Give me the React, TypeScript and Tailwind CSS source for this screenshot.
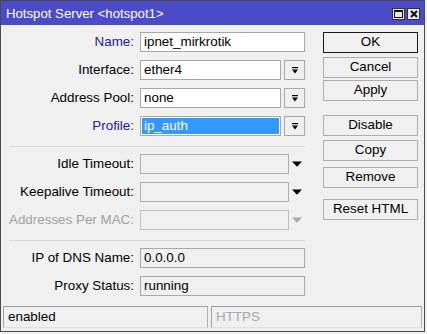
import React from "react";

const font = { fontFamily: '"Liberation Sans", Arial, sans-serif' };

function DropIcon() {
  return (
    <svg width="8" height="7" viewBox="0 0 8 7">
      <rect x="1" y="0" width="6" height="1.2" fill="#000" />
      <polygon points="1,2.5 7,2.5 4,6.5" fill="#000" />
    </svg>
  );
}

function Tri({ gray }: { gray?: boolean }) {
  return (
    <svg width="10" height="6" viewBox="0 0 10 6">
      <polygon points="0,0.5 10,0.5 5,5.8" fill={gray ? "#a8a8a8" : "#000"} />
    </svg>
  );
}

function Label({ children, color }: { children: React.ReactNode; color?: string }) {
  return (
    <div className={`w-[133px] shrink-0 text-right leading-[20px] whitespace-nowrap ${color ?? "text-black"}`}>
      {children}
    </div>
  );
}

function Btn({ children, cls, def }: { children: React.ReactNode; cls: string; def?: boolean }) {
  return (
    <div
      className={`w-[95px] h-[21px] flex items-center justify-center bg-[#f0f0f0] border ${
        def ? "border-[#1a1a1a]" : "border-[#adadad]"
      } ${cls}`}
    >
      {children}
    </div>
  );
}

export default function App() {
  return (
    <div className="w-[427px] h-[334px] bg-[#f0f0f0] text-[13.4px] text-black" style={font}>
      <div className="w-[425px] h-[332px] border border-[#4a4a4a] flex flex-col">
        <div className="h-[24px] bg-[#4b4bc8] flex items-center pl-[5px] pr-[4px] text-white text-[13.2px]">
          <span className="flex-1 pt-[1px]">Hotspot Server &lt;hotspot1&gt;</span>
          <div className="flex gap-[2px] mt-[1px]">
            <div className="w-[13px] h-[12px] bg-[#e6e6e6] border border-[#333] flex items-center justify-center">
              <div className="w-[9px] h-[8px] border border-[#111] border-t-2" />
            </div>
            <div className="w-[13px] h-[12px] bg-[#e6e6e6] border border-[#333] flex items-center justify-center">
              <svg width="8" height="8" viewBox="0 0 8 8">
                <path d="M1 1 L7 7 M7 1 L1 7" stroke="#111" strokeWidth="2" />
              </svg>
            </div>
          </div>
        </div>
        <div className="flex flex-1 pt-[7px]">
          <div className="w-[304px] flex flex-col">
            <div className="flex h-[20px]">
              <Label color="text-[#2020a0]">Name:</Label>
              <div className="ml-[6px] w-[165px] h-[20px] bg-white border border-[#a8a8a8] pl-[3px] leading-[18px]">
                ipnet_mirkrotik
              </div>
            </div>
            <div className="flex h-[20px] mt-[8px]">
              <Label>Interface:</Label>
              <div className="ml-[6px] w-[141px] h-[20px] bg-white border border-[#a8a8a8] pl-[3px] leading-[18px]">
                ether4
              </div>
              <div className="ml-[3px] w-[21px] h-[20px] bg-[#f0f0f0] border border-[#a8a8a8] flex items-center justify-center">
                <DropIcon />
              </div>
            </div>
            <div className="flex h-[20px] mt-[8px]">
              <Label>Address Pool:</Label>
              <div className="ml-[6px] w-[141px] h-[20px] bg-white border border-[#a8a8a8] pl-[3px] leading-[18px]">
                none
              </div>
              <div className="ml-[3px] w-[21px] h-[20px] bg-[#f0f0f0] border border-[#a8a8a8] flex items-center justify-center">
                <DropIcon />
              </div>
            </div>
            <div className="flex h-[20px] mt-[8px]">
              <Label color="text-[#2020a0]">Profile:</Label>
              <div className="ml-[6px] w-[141px] h-[20px] bg-white border border-[#a8a8a8] p-[1px]">
                <div className="h-full bg-[#3399ff] text-white pl-[2px] leading-[16px]">ip_auth</div>
              </div>
              <div className="ml-[3px] w-[21px] h-[20px] bg-[#f0f0f0] border border-[#a8a8a8] flex items-center justify-center">
                <DropIcon />
              </div>
            </div>
            <div className="ml-[8px] mt-[10px] h-px w-[296px] bg-[#d9d9d9]" />
            <div className="flex h-[20px] mt-[7px]">
              <Label>Idle Timeout:</Label>
              <div className="ml-[6px] w-[149px] h-[20px] border border-[#adadad]" />
              <div className="w-[16px] flex items-center justify-center">
                <Tri />
              </div>
            </div>
            <div className="flex h-[20px] mt-[8px]">
              <Label>Keepalive Timeout:</Label>
              <div className="ml-[6px] w-[149px] h-[20px] border border-[#adadad]" />
              <div className="w-[16px] flex items-center justify-center">
                <Tri />
              </div>
            </div>
            <div className="flex h-[20px] mt-[8px]">
              <Label color="text-[#a0a0a0]">Addresses Per MAC:</Label>
              <div className="ml-[6px] w-[149px] h-[20px] border border-[#c0c0c0]" />
              <div className="w-[16px] flex items-center justify-center">
                <Tri gray />
              </div>
            </div>
            <div className="ml-[8px] mt-[10px] h-px w-[296px] bg-[#d9d9d9]" />
            <div className="flex h-[20px] mt-[7px]">
              <Label>IP of DNS Name:</Label>
              <div className="ml-[6px] w-[165px] h-[20px] border border-[#a8a8a8] pl-[3px] leading-[18px]">
                0.0.0.0
              </div>
            </div>
            <div className="flex h-[20px] mt-[8px]">
              <Label>Proxy Status:</Label>
              <div className="ml-[6px] w-[165px] h-[20px] border border-[#a8a8a8] pl-[3px] leading-[18px]">
                running
              </div>
            </div>
          </div>
          <div className="ml-[18px] flex flex-col">
            <Btn cls="" def>
              OK
            </Btn>
            <Btn cls="mt-[4px]">Cancel</Btn>
            <Btn cls="mt-[2px]">Apply</Btn>
            <Btn cls="mt-[14px]">Disable</Btn>
            <Btn cls="mt-[4px]">Copy</Btn>
            <Btn cls="mt-[6px]">Remove</Btn>
            <Btn cls="mt-[11px]">Reset HTML</Btn>
          </div>
        </div>
        <div className="flex h-[22px] mb-[3px] ml-[2px] gap-[3px]">
          <div className="w-[205px] h-full border border-[#a0a0a0] border-b-[#e0e0e0] border-r-[#b0b0b0] pl-[4px] leading-[20px]">
            enabled
          </div>
          <div className="w-[211px] h-full border border-[#a0a0a0] border-b-[#e0e0e0] border-r-[#b0b0b0] pl-[4px] leading-[20px] text-[#a8a8a8]">
            HTTPS
          </div>
        </div>
      </div>
    </div>
  );
}
